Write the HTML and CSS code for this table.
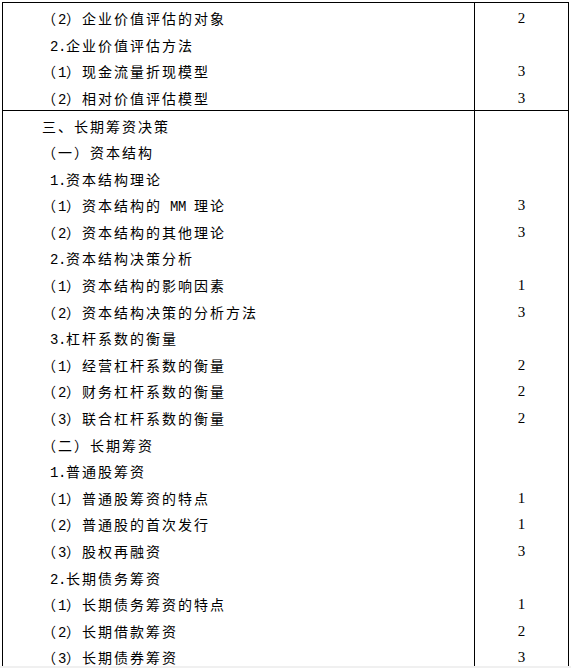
FILE: index.html
```html
<!DOCTYPE html>
<html lang="zh-CN">
<head>
<meta charset="utf-8">
<title>长期筹资决策</title>
<link rel="stylesheet" href="styles.css">
</head>
<body>
<div class="page">
  <div class="sheet">
    <div class="sec sec-a">
      <div class="topics">
        <p class="ln">（<span class="hw">2</span>）企业价值评估的对象</p>
        <p class="ln sub"><span class="hw">2.</span>企业价值评估方法</p>
        <p class="ln">（<span class="hw">1</span>）现金流量折现模型</p>
        <p class="ln">（<span class="hw">2</span>）相对价值评估模型</p>
      </div>
      <div class="hours">
        <p class="ln">2</p>
        <p class="ln"></p>
        <p class="ln">3</p>
        <p class="ln">3</p>
      </div>
    </div>
    <div class="sec sec-b">
      <div class="topics">
        <p class="ln">三、长期筹资决策</p>
        <p class="ln">（一）资本结构</p>
        <p class="ln sub"><span class="hw">1.</span>资本结构理论</p>
        <p class="ln">（<span class="hw">1</span>）资本结构的<span class="hw"> MM </span>理论</p>
        <p class="ln">（<span class="hw">2</span>）资本结构的其他理论</p>
        <p class="ln sub"><span class="hw">2.</span>资本结构决策分析</p>
        <p class="ln">（<span class="hw">1</span>）资本结构的影响因素</p>
        <p class="ln">（<span class="hw">2</span>）资本结构决策的分析方法</p>
        <p class="ln sub"><span class="hw">3.</span>杠杆系数的衡量</p>
        <p class="ln">（<span class="hw">1</span>）经营杠杆系数的衡量</p>
        <p class="ln">（<span class="hw">2</span>）财务杠杆系数的衡量</p>
        <p class="ln">（<span class="hw">3</span>）联合杠杆系数的衡量</p>
        <p class="ln">（二）长期筹资</p>
        <p class="ln sub"><span class="hw">1.</span>普通股筹资</p>
        <p class="ln">（<span class="hw">1</span>）普通股筹资的特点</p>
        <p class="ln">（<span class="hw">2</span>）普通股的首次发行</p>
        <p class="ln">（<span class="hw">3</span>）股权再融资</p>
        <p class="ln sub"><span class="hw">2.</span>长期债务筹资</p>
        <p class="ln">（<span class="hw">1</span>）长期债务筹资的特点</p>
        <p class="ln">（<span class="hw">2</span>）长期借款筹资</p>
        <p class="ln">（<span class="hw">3</span>）长期债券筹资</p>
      </div>
      <div class="hours">
        <p class="ln"></p>
        <p class="ln"></p>
        <p class="ln"></p>
        <p class="ln">3</p>
        <p class="ln">3</p>
        <p class="ln"></p>
        <p class="ln">1</p>
        <p class="ln">3</p>
        <p class="ln"></p>
        <p class="ln">2</p>
        <p class="ln">2</p>
        <p class="ln">2</p>
        <p class="ln"></p>
        <p class="ln"></p>
        <p class="ln">1</p>
        <p class="ln">1</p>
        <p class="ln">3</p>
        <p class="ln"></p>
        <p class="ln">1</p>
        <p class="ln">2</p>
        <p class="ln">3</p>
      </div>
    </div>
  </div>
</div>
</body>
</html>
```
FILE: styles.css
```css
html, body {
  margin: 0;
  padding: 0;
  overflow: hidden;
  background: #f0f0f0;
}

.page {
  height: 666px;
  overflow: hidden;
  background: #ffffff;
  padding-top: 2px;
  box-sizing: border-box;
}

.sheet {
  margin-left: 2px;
  width: 567px;
  box-sizing: border-box;
  border: 1px solid #000;
  border-bottom: none;
  color: #000;
}

.sec {
  display: grid;
  grid-template-columns: 472px 1fr;
}

.sec-a {
  height: 108px;
  box-sizing: border-box;
  border-bottom: 1px solid #000;
  --lh: 26.5px;
}

.sec-b {
  --lh: 26.6px;
}

.topics {
  border-right: 1px solid #000;
  padding-left: 39px;
  font-family: "Noto Sans CJK SC", sans-serif;
  font-size: 14px;
  letter-spacing: 2px;
}

.sec-a .topics,
.sec-a .hours {
  padding-top: 2px;
}

.sec-b .topics,
.sec-b .hours {
  padding-top: 1.5px;
}

.hours {
  text-align: center;
  font-family: "Liberation Serif", "Times New Roman", serif;
  font-size: 15px;
}

.ln {
  margin: 0;
  height: var(--lh);
  line-height: var(--lh);
  white-space: nowrap;
}

.sub {
  padding-left: 8px;
}

.hw {
  font-family: "Liberation Mono", monospace;
  letter-spacing: -0.4px;
  white-space: pre;
}
```
